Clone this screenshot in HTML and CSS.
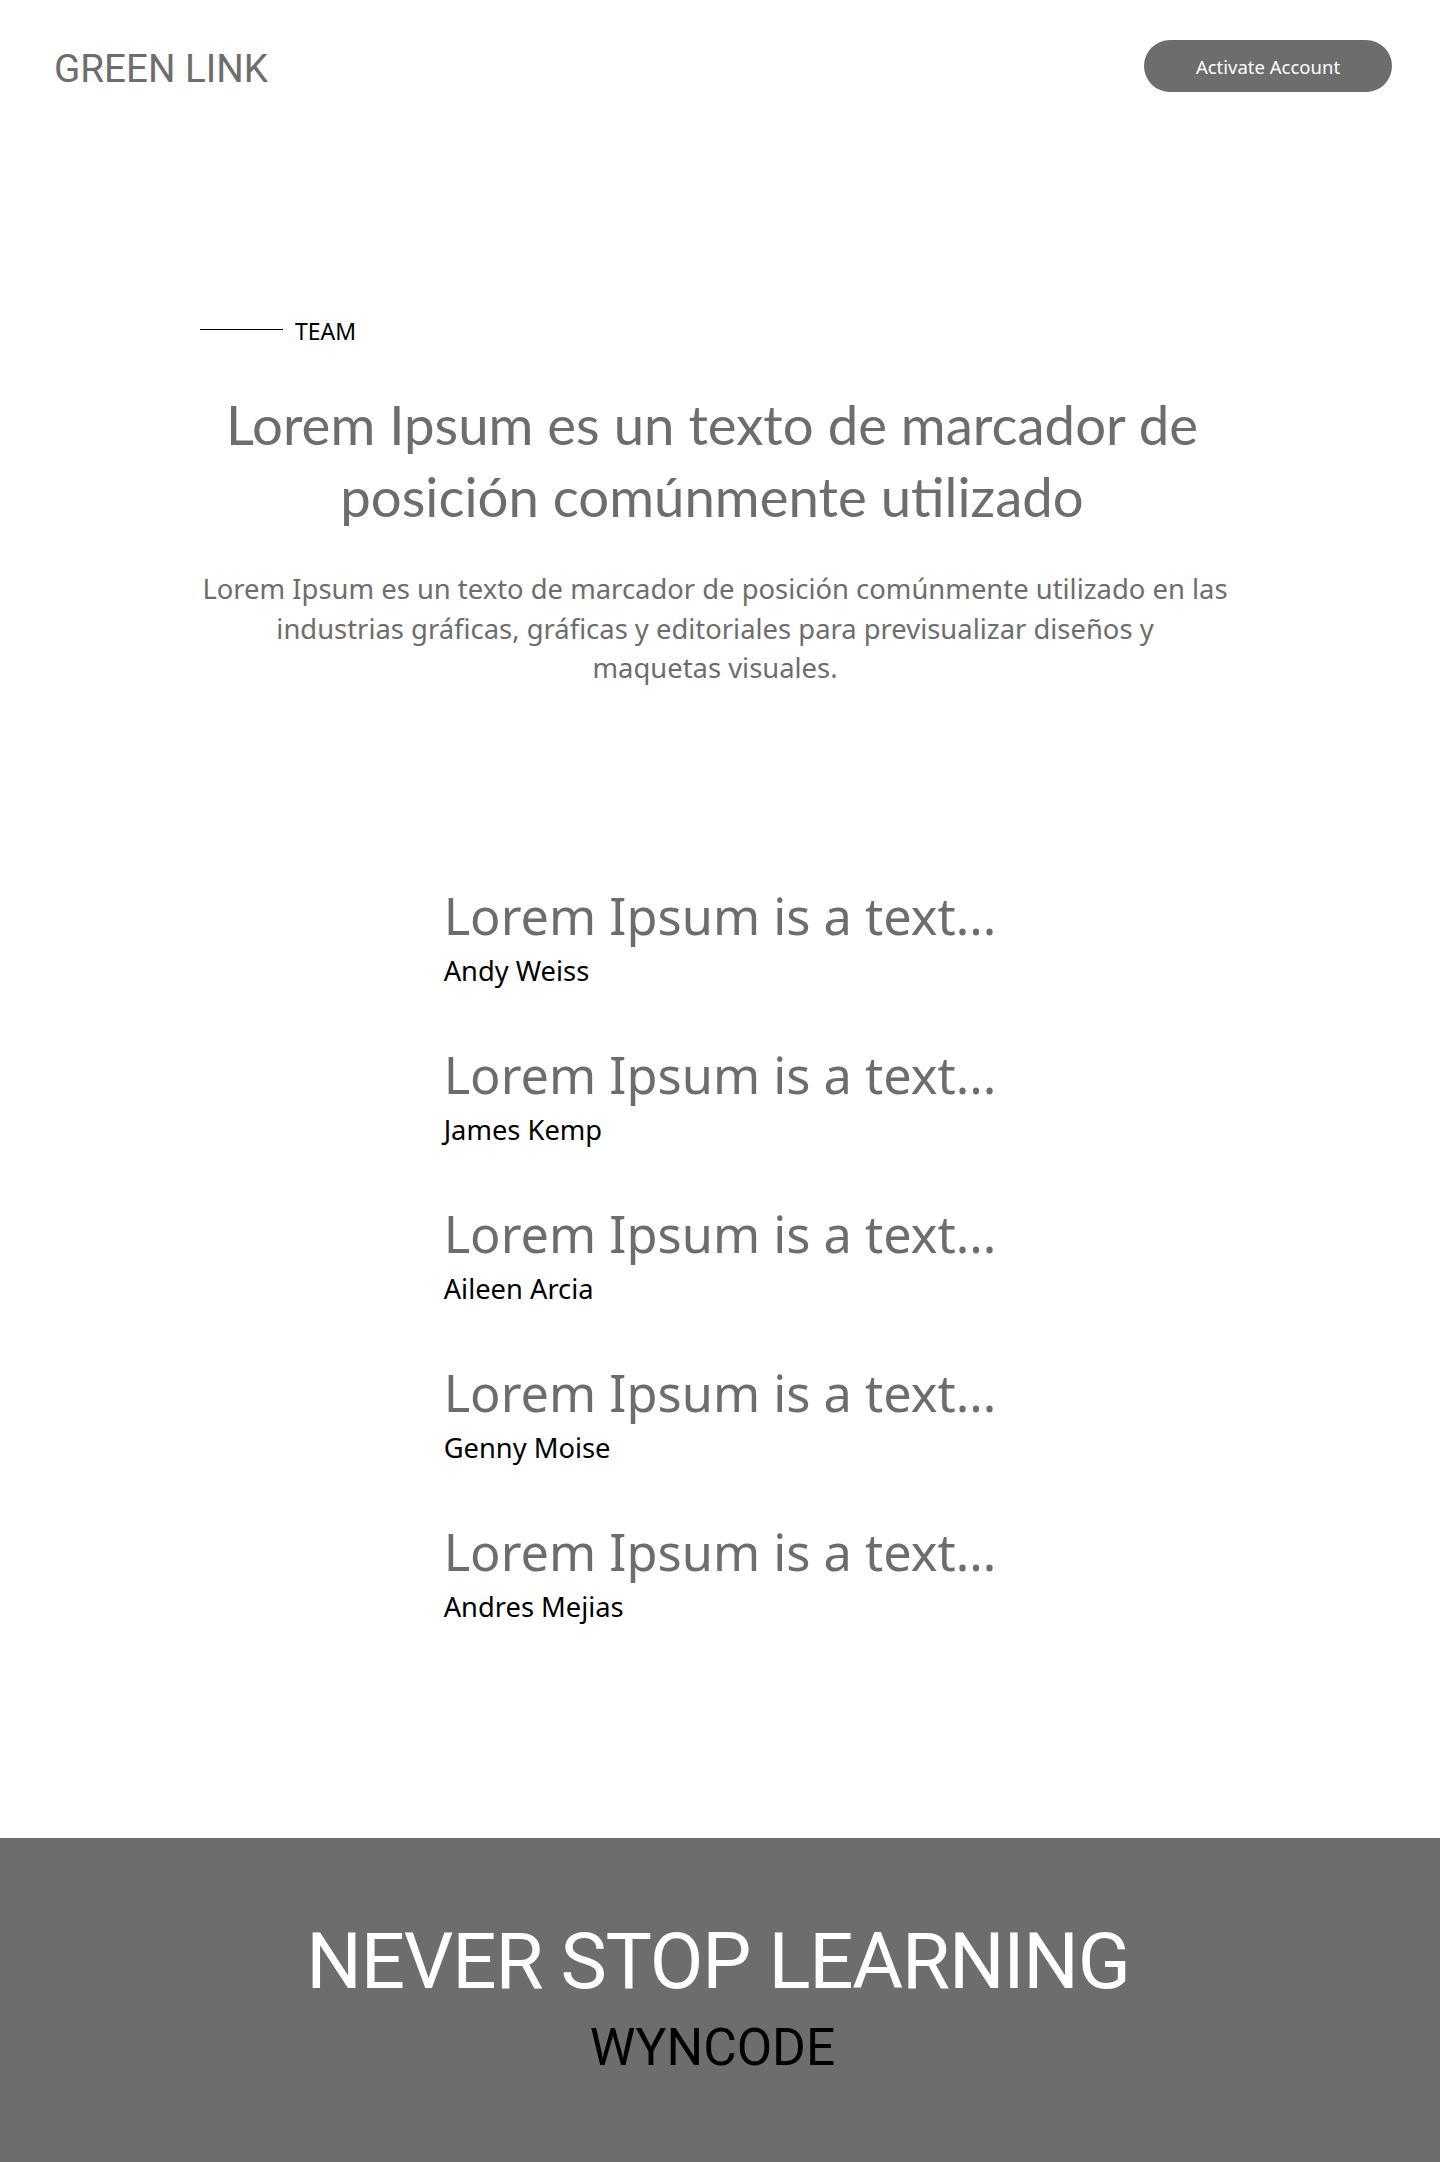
FILE: index.html
```html
<!DOCTYPE html>
<html lang="es">
<head>
<meta charset="utf-8">
<title>Green Link</title>
<link rel="stylesheet" href="styles.css">
</head>
<body>
<header class="site-header">
  <div class="logo">GREEN LINK</div>
  <a class="btn-activate" href="#">Activate Account</a>
</header>

<main>
  <section class="team-intro">
    <div class="eyebrow"><span class="eyebrow-line"></span><span class="eyebrow-text">TEAM</span></div>
    <h1 class="intro-title">Lorem Ipsum es un texto de marcador de posición comúnmente utilizado</h1>
    <p class="intro-text">Lorem Ipsum es un texto de marcador de posición comúnmente utilizado en las industrias gráficas, gráficas y editoriales para previsualizar diseños y<br>maquetas visuales.</p>
  </section>

  <section class="team-list">
    <ul class="members">
      <li class="member"><div class="member-quote">Lorem Ipsum is a text...</div><div class="member-name">Andy Weiss</div></li>
      <li class="member"><div class="member-quote">Lorem Ipsum is a text...</div><div class="member-name">James Kemp</div></li>
      <li class="member"><div class="member-quote">Lorem Ipsum is a text...</div><div class="member-name">Aileen Arcia</div></li>
      <li class="member"><div class="member-quote">Lorem Ipsum is a text...</div><div class="member-name">Genny Moise</div></li>
      <li class="member"><div class="member-quote">Lorem Ipsum is a text...</div><div class="member-name">Andres Mejias</div></li>
    </ul>
  </section>
</main>

<footer class="site-footer">
  <div class="footer-title">NEVER STOP LEARNING</div>
  <div class="footer-brand">WYNCODE</div>
</footer>
</body>
</html>
```
FILE: styles.css
```css
* { box-sizing: border-box; }

html, body {
  margin: 0;
  padding: 0;
  background: #ffffff;
}

body {
  font-family: "Noto Sans", "Open Sans", sans-serif;
  color: #000;
}

/* Header */
.site-header {
  display: flex;
  justify-content: space-between;
  align-items: flex-start;
  padding: 40px 48px 0 54px;
}

.logo {
  font-family: Roboto, "Noto Sans", sans-serif;
  font-size: 38.6px;
  line-height: 46px;
  margin-top: 6px;
  color: #6d6d6d;
}

.btn-activate {
  display: flex;
  align-items: center;
  justify-content: center;
  width: 248px;
  height: 52px;
  border-radius: 26px;
  background: #6d6d6d;
  color: #ffffff;
  text-decoration: none;
  font-family: "Noto Sans", sans-serif;
  font-size: 18.5px;
}

/* Intro */
.team-intro {
  width: 1030px;
  margin: 225px 0 0 200px;
}

.eyebrow {
  display: flex;
  align-items: center;
  gap: 12px;
  height: 28px;
}

.eyebrow-line {
  width: 83px;
  height: 1px;
  background: #000;
  margin-top: -3px;
}

.eyebrow-text {
  font-family: "Noto Sans", sans-serif;
  font-size: 23px;
  line-height: 28px;
  color: #000;
}

.intro-title {
  margin: 43px 0 0;
  padding-right: 6px;
  font-family: Lato, sans-serif;
  font-weight: 400;
  font-size: 54.5px;
  line-height: 72px;
  color: #6d6d6d;
  text-align: center;
}

.intro-text {
  margin: 37px 0 0;
  font-family: "Noto Sans", sans-serif;
  font-size: 27.4px;
  line-height: 39.5px;
  color: #6d6d6d;
  text-align: center;
}

/* Members */
.team-list {
  display: flex;
  justify-content: center;
  margin-top: 197px;
}

.members {
  list-style: none;
  margin: 0;
  padding: 0;
  display: flex;
  flex-direction: column;
  gap: 53px;
}

.member-quote {
  font-family: "Noto Sans", sans-serif;
  font-size: 50.5px;
  line-height: 62px;
  color: #6d6d6d;
  white-space: nowrap;
}

.member-name {
  margin-top: 4px;
  font-family: "Noto Sans", sans-serif;
  font-size: 27.3px;
  line-height: 40px;
  color: #000;
}

/* Footer */
.site-footer {
  margin-top: 211px;
  height: 324px;
  background: #6d6d6d;
  padding-top: 79px;
  text-align: center;
  font-family: Roboto, "Noto Sans", sans-serif;
}

.footer-title {
  font-size: 78px;
  line-height: 90px;
  letter-spacing: -1.2px;
  padding-right: 4px;
  color: #ffffff;
}

.footer-brand {
  margin-top: 11px;
  padding-right: 15px;
  font-size: 51.5px;
  line-height: 60px;
  color: #000;
}
```
